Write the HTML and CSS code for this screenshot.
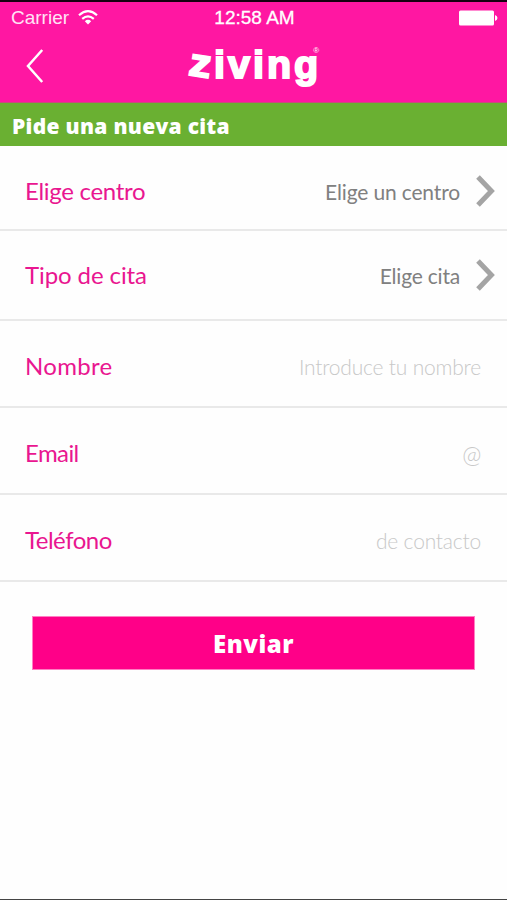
FILE: index.html
```html
<!DOCTYPE html>
<html lang="es">
<head>
<meta charset="utf-8">
<meta name="viewport" content="width=device-width, initial-scale=1">
<title>Pide una nueva cita</title>
<link rel="stylesheet" href="styles.css">
</head>
<body>
<div class="screen">
  <header class="header">
    <div class="status">
      <div class="carrier"><span class="carrier-name">Carrier</span>
        <svg class="wifi" width="20" height="15" viewBox="0 0 20 15" fill="none" stroke="currentColor" stroke-width="2.2"><path d="M1 5.2Q10-2.8 19 5.2M4.2 8.9Q10 3.8 15.8 8.9"/><path d="M6.8 11.2Q10 8.3 13.2 11.2L10 14.6Z" fill="currentColor" stroke="none"/></svg>
      </div>
      <span class="clock">12:58 AM</span>
      <svg class="battery" width="39" height="16" viewBox="0 0 39 16" fill="currentColor"><rect width="35" height="15" y=".5" rx="1.5"/><path d="M36 5q2.5.8 2.5 3T36 11z"/></svg>
    </div>
    <div class="navbar">
      <svg class="back" width="18" height="34" viewBox="0 0 18 34" fill="none" stroke="currentColor" stroke-width="2.5"><path d="M16.2 1L2 17l14.2 16"/></svg>
      <div class="logo"><span class="logo-z">z</span><span class="logo-rest">iving</span><span class="reg">®</span></div>
    </div>
  </header>
  <h1 class="title">Pide una nueva cita</h1>
  <main>
    <div class="row row-centro"><span class="label label-centro">Elige centro</span><span class="choice choice-centro">Elige un centro</span><svg class="chevron" width="19" height="32" viewBox="0 0 19 32" fill="none" stroke="currentColor" stroke-width="5"><path d="M2 2l13.4 14L2 30"/></svg></div>
    <div class="row row-tipo"><span class="label label-tipo">Tipo de cita</span><span class="choice">Elige cita</span><svg class="chevron" width="19" height="32" viewBox="0 0 19 32" fill="none" stroke="currentColor" stroke-width="5"><path d="M2 2l13.4 14L2 30"/></svg></div>
    <div class="row"><span class="label label-nombre">Nombre</span><span class="hint">Introduce tu nombre</span></div>
    <div class="row"><span class="label label-email">Email</span><span class="hint hint-at">@</span></div>
    <div class="row"><span class="label label-tel">Teléfono</span><span class="hint">de contacto</span></div>
    <button class="submit">Enviar</button>
  </main>
</div>
</body>
</html>
```
FILE: styles.css
```css
* { box-sizing: border-box; }
body { margin: 0; background: #fefefe; font-family: Lato, "Liberation Sans", sans-serif; }
.screen { height: 900px; border-top: 2px solid #160010; border-bottom: 1px solid #444; overflow: hidden; }
.header { height: 101px; background: #ff17a2; color: #fff; border-bottom: 1px solid #c94c7d; }
.status { display: grid; grid-template-columns: 1fr auto 1fr; align-items: center; height: 32px; padding: 0 9px 0 11px; font: 19px/32px "Liberation Sans", sans-serif; }
.carrier { display: flex; align-items: center; gap: 9px; color: #ffe3f5; }
.wifi { color: #fff; margin-top: -2px; }
.clock { -webkit-text-stroke: .3px #fff; }
.battery { justify-self: end; }
.navbar { display: grid; grid-template-columns: 191px auto 1fr; align-items: center; height: 64px; }
.back { margin-left: 26px; }
.logo { display: flex; align-items: baseline; height: 60px; margin-top: -4px; font: 700 39.5px/60px "Liberation Sans", sans-serif; letter-spacing: 3px; -webkit-text-stroke: 2px #fff; }
.logo-z { width: 23px; transform: translateY(-1px) rotate(9deg) scaleX(1.1); }
.reg { align-self: flex-start; margin: 13px 0 0 -8px; font-size: 8px; line-height: 8px; font-weight: 400; letter-spacing: 0; -webkit-text-stroke: 0; }
.title { height: 43px; margin: 0; padding-left: 12px; background: #6ab032; color: #fff; font: 800 21px/46px "Open Sans", sans-serif; letter-spacing: .3px; }
.row { display: flex; align-items: center; height: 87px; padding: 5px 26px 0 25px; border-bottom: 2px solid #e9e9e9; }
.row-centro { height: 85px; padding: 6px 12px 0 25px; }
.row-tipo { height: 90px; padding: 0 12px 0 25px; }
.label { margin-top: -1px; color: #e91690; font-size: 24px; }
.label-centro { margin-top: 0; letter-spacing: -.3px; }
.label-tipo { margin-top: -2px; letter-spacing: -.1px; }
.label-nombre { letter-spacing: .3px; }
.label-email { letter-spacing: -.6px; }
.label-tel { letter-spacing: -.5px; }
.choice { margin: 1px 4px 0 auto; color: #808080; font-size: 21px; letter-spacing: -.2px; }
.choice-centro { letter-spacing: -.15px; }
.chevron { margin-left: 12px; color: #a4a4a4; }
.hint { margin: 1px 0 0 auto; color: #c8c8c8; font-size: 21px; font-weight: 300; letter-spacing: -.2px; }
.hint-at { font-size: 23px; }
.submit { display: block; width: 443px; height: 54px; margin: 34px 0 0 32px; padding: 1px 0 0; border: 1px solid #ff7fc3; background: #ff0088; color: #fff; font: 800 24px/50px "Open Sans", sans-serif; letter-spacing: .5px; }
```
